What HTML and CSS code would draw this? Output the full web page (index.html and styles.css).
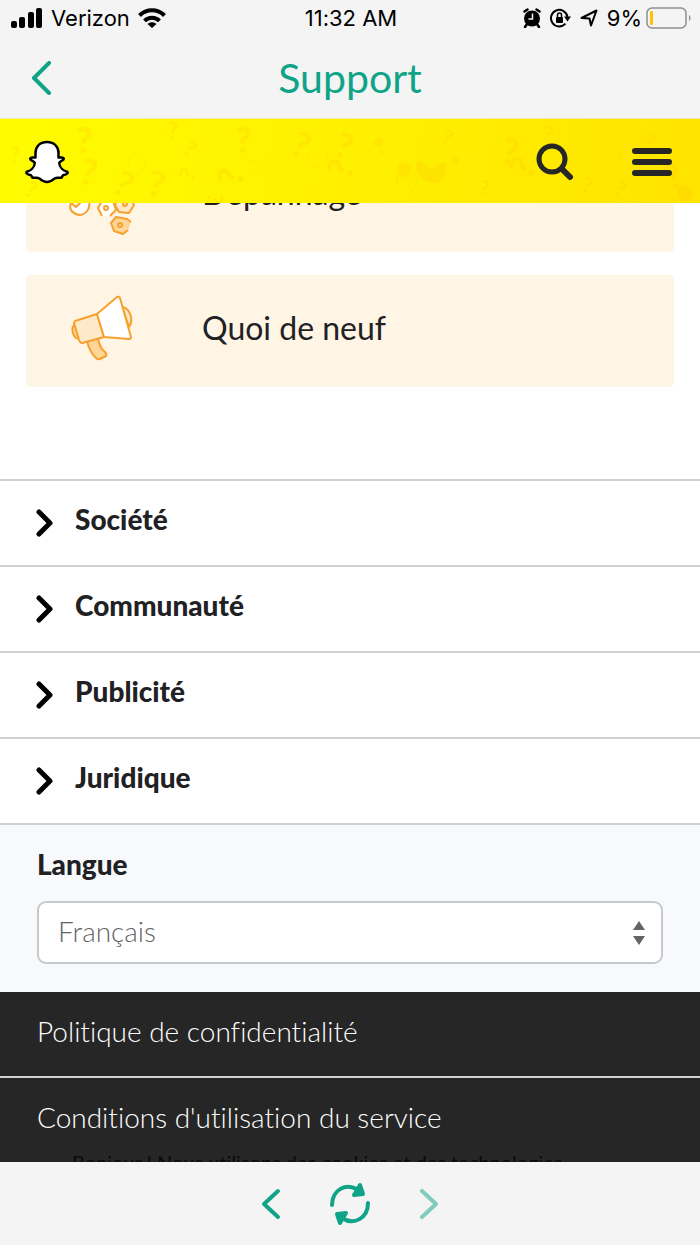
FILE: index.html
```html
<!DOCTYPE html>
<html lang="fr">
  <head>
    <meta charset="UTF-8" />
    <meta name="viewport" content="width=device-width, initial-scale=1.0" />
    <title>Support</title>
    <link rel="stylesheet" href="styles.css">
  </head>
  <body>
    <header class="top">
      <div class="status">
        <div class="status-left">
          <svg width="32" height="20" viewBox="0 0 32 20">
            <rect x="0" y="13" width="6" height="7" rx="2" />
            <rect x="8" y="9" width="6" height="11" rx="2" />
            <rect x="17" y="4" width="6" height="16" rx="2" />
            <rect x="25" y="0" width="6" height="20" rx="2" />
          </svg>
          <span>Verizon</span>
          <svg width="28" height="20" viewBox="0 0 28 20">
            <g fill="none" stroke="#000" stroke-width="4">
              <path d="M1.500 7.500C8.500 0.500 19.500 0.500 26.500 7.500" />
              <path d="M6.500 12.800C10.700 8.600 17.300 8.600 21.500 12.800" />
            </g>
            <path d="M9.500 16C12 13.700 16 13.700 18.500 16L14 20Z" />
          </svg>
        </div>
        <span>11:32 AM</span>
        <div class="status-right">
          <svg width="18" height="20" viewBox="0 0 18 20">
            <circle cx="9" cy="10.500" r="8" />
            <path d="M1.500 3.500L4.500 1.500M16.500 3.500L13.500 1.500M4 16L2 19M14 16L16 19" stroke="#000" stroke-width="2.500" stroke-linecap="round" />
            <path d="M9.500 5.500V11H5.500" fill="none" stroke="#f4f4f4" stroke-width="1.500" />
          </svg>
          <svg width="21" height="20" viewBox="0 0 21 20">
            <path d="M15.500 15.700A8.300 8.300 0 1 1 17.500 9" fill="none" stroke="#000" stroke-width="2" />
            <path d="M14 8.500H21L17.500 13.500Z" />
            <rect x="6" y="9" width="7" height="6" rx="1" />
            <path d="M7.500 9V7A2 2 0 0 1 11.500 7V9" fill="none" stroke="#000" stroke-width="1.500" />
          </svg>
          <svg width="18" height="18" viewBox="0 0 18 18">
            <path d="M1.500 9L16.500 1.500L11 16.500L9.500 9.500Z" fill="none" stroke="#000" stroke-width="2" stroke-linejoin="round" />
          </svg>
          <span class="battery">9%
            <svg width="45" height="22" viewBox="0 0 45 22">
              <rect x="1" y="1" width="39" height="20" rx="5" fill="none" stroke="#8e8e8e" stroke-width="1.500" />
              <rect x="4" y="4" width="3" height="14" rx="1" fill="#ffc400" />
              <path d="M43 8C45 9 45 13 43 14Z" fill="#8e8e8e" />
            </svg>
          </span>
        </div>
      </div>
      <div class="titlebar">
        <button class="icon-button back" aria-label="Retour">
          <svg width="20" height="34" viewBox="0 0 20 34"><path d="M17 2L2 17L17 32" /></svg>
        </button>
        <h1>Support</h1>
      </div>
    </header>

    <div class="brand">
      <svg class="pattern" viewBox="0 0 700 84" preserveAspectRatio="xMidYMid slice" aria-hidden="true">
        <g class="bold">
          <text transform="translate(76 34)">?</text>
          <text transform="translate(78 64) rotate(12)">?</text>
          <text transform="translate(110 72) rotate(30)">?</text>
          <text transform="translate(146 76) rotate(12)">?</text>
          <text transform="translate(235 34)">?</text>
          <text transform="translate(242 68) rotate(-80)">?</text>
          <text transform="translate(288 34) rotate(25)">?</text>
          <text transform="translate(332 36) rotate(20)">?</text>
          <text transform="translate(350 62) rotate(-70)">?</text>
          <text transform="translate(500 44) rotate(10)">?</text>
          <text transform="translate(530 62) rotate(-60)">?</text>
          <text transform="translate(670 72) rotate(-20)">?</text>
        </g>
        <g class="small">
          <text transform="translate(10 44)">?</text>
          <text transform="translate(24 76) rotate(20)">?</text>
          <text transform="translate(168 20)">?</text>
          <text transform="translate(182 34) rotate(30)">?</text>
          <text transform="translate(192 64) rotate(-60)">?</text>
          <text transform="translate(208 74) rotate(100)">?</text>
          <text transform="translate(378 36) rotate(-20)">?</text>
          <text transform="translate(440 24) rotate(20)">?</text>
          <text transform="translate(542 22) rotate(10)">?</text>
          <text transform="translate(580 72) rotate(20)">?</text>
          <text transform="translate(643 28) rotate(15)">?</text>
          <text transform="translate(478 76) rotate(10)">?</text>
          <text transform="translate(612 74) rotate(30)">?</text>
        </g>
        <g class="rings">
          <path d="M130 50A9 9 0 1 1 141 52L136 59" />
          <path d="M308 36A10 10 0 1 0 324 30" />
          <path d="M250 45A6 6 0 1 1 253 54" />
          <path d="M398 66A10 10 0 1 1 412 70L408 78" />
          <path d="M610 38A6 6 0 1 1 618 42" />
        </g>
        <g class="blobs">
          <path d="M416 46Q420 38 426 46Q434 54 440 44Q448 40 446 52Q444 66 432 64Q416 60 416 46Z" />
          <circle cx="404" cy="51" r="7" />
          <circle cx="378" cy="24" r="4" />
          <circle cx="455" cy="42" r="4" />
          <circle cx="685" cy="74" r="8" />
        </g>
      </svg>
      <a class="logo" href="#" aria-label="Accueil">
        <svg width="44" height="44" viewBox="0 0 44 44">
          <path d="M22 2C14.500 2 10.500 7 10.500 13V17.500C9 18 6 16.500 5.200 18.500C4.700 20.500 9.500 21 9.800 23C9.500 27 6 30.500 2 31.700C0.500 32.500 1.500 34.500 6 35.300C7 36 6.500 37.500 8 37.800C10.500 38 12 37 14.500 38.500C17 40.500 19 42 22 42C25 42 27 40.500 29.500 38.500C32 37 33.500 38 36 37.800C37.500 37.500 37 36 38 35.300C42.500 34.500 43.500 32.500 42 31.700C38 30.500 34.500 27 34.200 23C34.500 21 39.300 20.500 38.800 18.500C38 16.500 35 18 33.500 17.500V13C33.500 7 29.500 2 22 2Z" fill="#fff" stroke="#000" stroke-width="2.500" stroke-linejoin="round" />
        </svg>
      </a>
      <div class="brand-actions">
        <button class="icon-button" aria-label="Rechercher">
          <svg width="38" height="38" viewBox="0 0 38 38" fill="none" stroke="#262626">
            <circle cx="16" cy="16" r="13" stroke-width="5" />
            <path d="M26 26L34 34" stroke-width="6" stroke-linecap="round" />
          </svg>
        </button>
        <button class="icon-button" aria-label="Menu">
          <svg width="42" height="30" viewBox="0 0 42 30" stroke="#262626" stroke-width="6" stroke-linecap="round">
            <path d="M4 4H38M4 15H38M4 26H38" />
          </svg>
        </button>
      </div>
    </div>

    <main class="page">
      <div class="cards">
        <a class="card" href="#">
          <svg width="68" height="68" viewBox="0 0 68 68" class="drawing">
            <path d="M18 30L20 43C22 53 14 59 7 56C2 54 0 50 2 45L7 49L12 44L8 41L9 30" fill="#fff" />
            <path d="M41 58L47 52L44 43L34 41L29 50L33 58" fill="#fff" />
            <path d="M49 39H61L65 47L60 55L50 54L46 47Z" fill="#fee9c9" />
            <path d="M59 72L54 76L45 73L42 65L47 59L58 61L62 64" fill="#fed698" />
            <circle cx="37" cy="50" r="2" /><circle cx="56" cy="46" r="2" /><circle cx="51" cy="67" r="2" />
          </svg>
          <span>Dépannage</span>
        </a>
        <a class="card" href="#">
          <svg width="68" height="68" viewBox="0 0 68 68" class="drawing">
            <path d="M53 14C61 15 65 27 60 34Z" fill="#fee9c9" />
            <path d="M7 31C1 33 3 45 10 46Z" fill="#fed698" />
            <path d="M18 48C20 57 24 62 27 65Q29 67 31 66L37 63Q38 61 36 59C32 56 30 52 29 45Z" fill="#fed698" />
            <path d="M6 28L28 21L35 44L13 50Q11 50 10 47L5 30Z" fill="#fee9c9" />
            <path d="M28 21L48 4Q50 3 51 5L62 44Q62 46 60 46L35 44Z" fill="#fff" />
          </svg>
          <span>Quoi de neuf</span>
        </a>
      </div>

      <nav class="sections">
        <button class="section">
          <svg width="18" height="28" viewBox="0 0 18 28"><path d="M3 3L14 14L3 25" /></svg>
          <span>Société</span>
        </button>
        <button class="section">
          <svg width="18" height="28" viewBox="0 0 18 28"><path d="M3 3L14 14L3 25" /></svg>
          <span>Communauté</span>
        </button>
        <button class="section">
          <svg width="18" height="28" viewBox="0 0 18 28"><path d="M3 3L14 14L3 25" /></svg>
          <span>Publicité</span>
        </button>
        <button class="section">
          <svg width="18" height="28" viewBox="0 0 18 28"><path d="M3 3L14 14L3 25" /></svg>
          <span>Juridique</span>
        </button>
      </nav>

      <div class="language">
        <label for="lang">Langue</label>
        <div class="select-wrap">
          <select id="lang">
            <option>Français</option>
          </select>
          <svg class="arrows" width="12" height="24" viewBox="0 0 12 24"><path d="M6 0L12 9H0ZM0 15H12L6 24Z" /></svg>
        </div>
      </div>

      <footer class="legal">
        <a href="#">Politique de confidentialité</a>
        <a href="#">Conditions d'utilisation du service</a>
      </footer>

      <div class="cookies">Bonjour ! Nous utilisons des cookies et des technologies</div>
    </main>

    <div class="toolbar">
      <button class="icon-button" aria-label="Précédent">
        <svg width="20" height="32" viewBox="0 0 20 32"><path d="M17 3L3 16L17 29" /></svg>
      </button>
      <button class="icon-button" aria-label="Actualiser">
        <svg width="42" height="44" viewBox="0 0 42 44">
          <path d="M3 23C3 8 17 0 29 8M39 21C39 36 25 44 13 36" />
          <path class="solid" d="M31 3L34 12L25 13ZM11 41L8 32L17 31Z" />
        </svg>
      </button>
      <button class="icon-button" aria-label="Suivant" disabled>
        <svg width="20" height="32" viewBox="0 0 20 32"><path d="M3 3L17 16L3 29" /></svg>
      </button>
    </div>
  </body>
</html>
```
FILE: styles.css
```css
* {
  box-sizing: border-box;
}

body {
  display: flex;
  flex-direction: column;
  height: 100vh;
  margin: 0;
  background-color: #fff;
  color: #212124;
  font-family: Lato, sans-serif;
  font-variant-ligatures: none;
}

a {
  color: inherit;
  text-decoration: none;
}

svg {
  display: block;
  flex: none;
}

.icon-button {
  padding: 0;
  border: none;
  background: none;
  cursor: pointer;
}

/* status line and title */

.top {
  background-color: #f4f4f4;
  border-bottom: 1px solid #f0e9b0;
}

.status {
  display: grid;
  grid-template-columns: 1fr auto 1fr;
  align-items: center;
  height: 38px;
  padding: 0 9px 2px 11px;
  color: #000;
  font-family: Inter, sans-serif;
  font-size: 22px;
}

.status-left,
.status-right {
  display: flex;
  align-items: center;
  gap: 8px;
}

.status-right {
  justify-content: flex-end;
  gap: 9px;
}

.battery {
  display: flex;
  align-items: center;
  gap: 4px;
}

.titlebar {
  display: grid;
  grid-template-columns: 1fr auto 1fr;
  align-items: center;
  height: 80px;
  padding: 0 32px;
}

.titlebar h1 {
  margin: 0;
  color: #0fa487;
  font-size: 41px;
  font-weight: 400;
  line-height: 48px;
}

.back {
  justify-self: start;
}

.back path,
.toolbar path {
  fill: none;
  stroke: #0fa487;
  stroke-width: 4;
  stroke-linecap: round;
  stroke-linejoin: round;
}

/* yellow bar */

.brand {
  position: relative;
  display: flex;
  align-items: center;
  justify-content: space-between;
  height: 84px;
  padding: 2px 27px 0 25px;
  background: linear-gradient(100deg, #fffc00, #fff000 50%, #ffe400);
}

.pattern {
  position: absolute;
  inset: 0;
  width: 100%;
  height: 100%;
  fill: #ffc800;
  opacity: 0.25;
}

.pattern .bold {
  font-size: 36px;
  font-weight: 900;
}

.pattern .small {
  font-size: 22px;
  font-weight: 700;
}

.pattern .rings {
  fill: none;
  stroke: #ffc800;
}

.logo,
.brand-actions {
  position: relative;
}

.brand-actions {
  display: flex;
  align-items: center;
  gap: 57px;
}

/* scrolled content */

.page {
  position: relative;
  flex: 1;
  min-height: 0;
  overflow: hidden;
}

.cards {
  display: flex;
  flex-direction: column;
  gap: 23px;
  margin-top: -63px;
  padding: 0 26px 92px;
}

.card {
  display: flex;
  align-items: center;
  gap: 65px;
  height: 112px;
  padding: 0 43px 8px;
  border-radius: 5px;
  background-color: #fff5e5;
  font-size: 32px;
}

.drawing {
  overflow: visible;
  stroke: #f7a02d;
  stroke-width: 2;
  stroke-linejoin: round;
  fill: none;
}

.section {
  display: flex;
  align-items: center;
  gap: 21px;
  width: 100%;
  height: 86px;
  padding: 0 36px;
  border: none;
  border-top: 2px solid #cfcfd1;
  background: none;
  color: inherit;
  font-family: inherit;
  font-size: 28px;
  font-weight: 900;
  cursor: pointer;
}

.section span {
  padding-bottom: 8px;
}

.section path {
  fill: none;
  stroke: #000;
  stroke-width: 5;
  stroke-linecap: round;
  stroke-linejoin: round;
}

.language {
  display: flex;
  flex-direction: column;
  gap: 20px;
  height: 169px;
  padding: 22px 37px 0;
  border-top: 2px solid #cfcfd1;
  background-color: #f7f9fb;
}

.language label {
  font-size: 28px;
  font-weight: 900;
  line-height: 34px;
}

.select-wrap {
  position: relative;
}

.select-wrap select {
  appearance: none;
  width: 100%;
  height: 63px;
  padding: 0 19px 4px;
  border: 2px solid #c6c9cb;
  border-radius: 9px;
  background-color: #fff;
  color: #656565;
  font-family: inherit;
  font-size: 28px;
  font-weight: 300;
}

.arrows {
  position: absolute;
  top: 20px;
  right: 18px;
  fill: #656565;
  pointer-events: none;
}

.legal {
  background-color: #262626;
  color: #fff;
  font-size: 28px;
  font-weight: 300;
}

.legal a {
  display: flex;
  align-items: center;
  height: 84px;
  padding: 0 37px 6px;
}

.legal a + a {
  height: 86px;
  border-top: 2px solid #d0d0d0;
}

/* top edge of the cookie notice */

.cookies {
  position: absolute;
  right: 0;
  bottom: 0;
  left: 0;
  height: 10px;
  padding: 0 72px;
  overflow: hidden;
  color: #0a0a0a;
  font-size: 20px;
  line-height: 20px;
  white-space: nowrap;
}

.toolbar {
  display: flex;
  align-items: center;
  justify-content: center;
  gap: 48px;
  height: 83px;
  background-color: #f4f4f4;
}

.toolbar .solid {
  fill: #0fa487;
}

.toolbar button:disabled {
  opacity: 0.5;
}
```
